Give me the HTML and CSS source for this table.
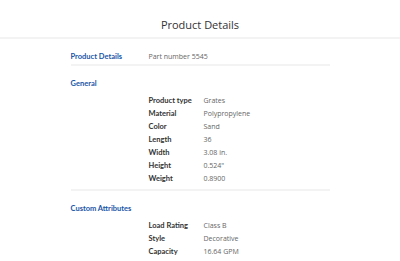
FILE: index.html
```html
<!DOCTYPE html>
<html lang="en">
  <head>
    <meta charset="UTF-8" />
    <meta name="viewport" content="width=device-width, initial-scale=1.0" />
    <title>Product Details</title>
    <link rel="stylesheet" href="styles.css">
  </head>
  <body>
    <div class="header">
      <h1>Product Details</h1>
    </div>

    <div class="container">
      <div class="section section-inline">
        <h2>Product Details</h2>
        <div class="value">Part number 5545</div>
      </div>

      <div class="section">
        <h2>General</h2>
        <table class="attrs">
          <tr><th>Product type</th><td>Grates</td></tr>
          <tr><th>Material</th><td>Polypropylene</td></tr>
          <tr><th>Color</th><td>Sand</td></tr>
          <tr><th>Length</th><td>36</td></tr>
          <tr><th>Width</th><td>3.08 in.</td></tr>
          <tr><th>Height</th><td>0.524"</td></tr>
          <tr><th>Weight</th><td>0.8900</td></tr>
        </table>
      </div>

      <div class="section">
        <h2>Custom Attributes</h2>
        <table class="attrs">
          <tr><th>Load Rating</th><td>Class B</td></tr>
          <tr><th>Style</th><td>Decorative</td></tr>
          <tr><th>Capacity</th><td>16.64 GPM</td></tr>
        </table>
      </div>
    </div>
  </body>
</html>
```

FILE: styles.css
```css
body {
  margin: 0;
  font-family: "Open Sans", sans-serif;
  background-color: white;
  color: #666;
}

.header {
  border-bottom: 2px solid #f3f3f3;
  padding: 18px 0 5px;
  text-align: center;
}

h1 {
  margin: 0;
  font-family: "Open Sans", sans-serif;
  font-weight: normal;
  font-size: 11px;
  line-height: 14px;
  color: #333;
}

.container {
  width: 259px;
  margin: 0 auto;
}

.section {
  border-bottom: 2px solid #f3f3f3;
  padding: 13px 0 4px;
}

.section:last-child {
  border-bottom: none;
}

.section-inline {
  display: flex;
  padding: 13px 0 2px;
}

h2 {
  margin: 0;
  width: 78px;
  font-family: Lato, sans-serif;
  font-size: 7.5px;
  line-height: 10px;
  font-weight: bold;
  color: #1a56a6;
}

.value {
  font-size: 7px;
  line-height: 10px;
  color: #666;
}

.attrs {
  border-collapse: collapse;
  margin: 5px 0 0 78px;
}

.attrs th,
.attrs td {
  padding: 0;
  height: 13px;
  line-height: 13px;
  text-align: left;
  vertical-align: middle;
}

.attrs th {
  width: 55px;
  font-family: Lato, sans-serif;
  font-size: 7.5px;
  font-weight: bold;
  color: #333;
}

.attrs td {
  font-size: 7px;
  color: #666;
}
```
